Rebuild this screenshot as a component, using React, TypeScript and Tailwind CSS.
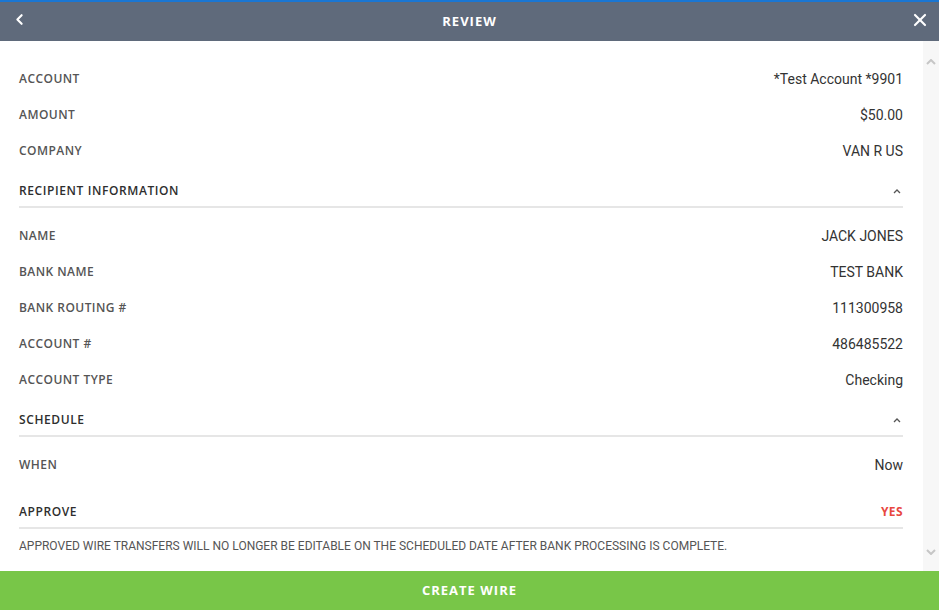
import { ChevronLeft, X } from 'lucide-react';

// Revisión de la transferencia antes de crearla.

const labelFont = { fontFamily: '"Open Sans", "DejaVu Sans", sans-serif' };

const LABEL = 'text-[12px] font-semibold tracking-[0.45px] text-[#555555]';
const VALUE = 'text-[14px] text-[#333333] font-["Roboto",sans-serif]';

type Row = { label: string; value: string };

const topRows: Row[] = [
  { label: 'ACCOUNT', value: '*Test Account *9901' },
  { label: 'AMOUNT', value: '$50.00' },
  { label: 'COMPANY', value: 'VAN R US' },
];

const recipientRows: Row[] = [
  { label: 'NAME', value: 'JACK JONES' },
  { label: 'BANK NAME', value: 'TEST BANK' },
  { label: 'BANK ROUTING #', value: '111300958' },
  { label: 'ACCOUNT #', value: '486485522' },
  { label: 'ACCOUNT TYPE', value: 'Checking' },
];

function DetailRow({ label, value }: Row) {
  return (
    <div className="flex h-[36px] items-center justify-between">
      <span className={LABEL}>{label}</span>
      <span className={VALUE}>{value}</span>
    </div>
  );
}

function Caret() {
  return (
    <svg width="8" height="5" viewBox="0 0 8 5" className="mr-[2px]">
      <path d="M1 4 L4 1 L7 4" fill="none" stroke="#555" strokeWidth="1.3" />
    </svg>
  );
}

function SectionHeader({ title, className = '' }: { title: string; className?: string }) {
  return (
    <div
      className={`flex items-center justify-between border-b-2 border-[#e6e6e6] pb-[7px] ${className}`}
    >
      <span className="text-[12px] leading-[16px] font-semibold tracking-[0.6px] text-[#2e2e2e]">
        {title}
      </span>
      <Caret />
    </div>
  );
}

export default function App() {
  return (
    <div className="flex h-[610px] w-[939px] flex-col bg-white" style={labelFont}>
      <header className="relative flex h-[41px] items-center justify-center border-t-2 border-[#1a76d2] bg-[#5f6a7b]">
        <ChevronLeft className="absolute left-[11px] top-[9px] text-white" size={17} strokeWidth={3} />
        <span className="text-[13px] font-bold tracking-[1px] text-white">REVIEW</span>
        <X className="absolute right-[9px] top-[8px] text-white" size={20} strokeWidth={2.6} />
      </header>

      <div className="flex min-h-0 flex-1">
        <main className="flex-1 pl-[19px] pr-[20px] pt-[20px]">
          {topRows.map((r) => (
            <DetailRow key={r.label} {...r} />
          ))}

          <SectionHeader title="RECIPIENT INFORMATION" className="pt-[14px]" />
          <div className="mt-[10px]">
            {recipientRows.map((r) => (
              <DetailRow key={r.label} {...r} />
            ))}
          </div>

          <SectionHeader title="SCHEDULE" className="pt-[14px]" />
          <div className="mt-[10px]">
            <DetailRow label="WHEN" value="Now" />
          </div>

          <div className="flex items-center justify-between border-b-2 border-[#e6e6e6] pb-[7px] pt-[21px]">
            <span className="text-[12px] leading-[16px] font-semibold tracking-[0.6px] text-[#2e2e2e]">
              APPROVE
            </span>
            <span className="text-[12px] leading-[16px] font-bold tracking-[0.4px] text-[#e8483f]">
              YES
            </span>
          </div>
          <p className="mt-[9px] text-[12px] leading-[16px] text-[#555555] font-['Roboto',sans-serif]">
            APPROVED WIRE TRANSFERS WILL NO LONGER BE EDITABLE ON THE SCHEDULED DATE AFTER BANK
            PROCESSING IS COMPLETE.
          </p>
        </main>

        <aside className="flex w-[16px] flex-col items-center justify-between bg-[#f7f7f7] pb-[16px] pt-[18px]">
          <svg width="10" height="6" viewBox="0 0 10 6">
            <path d="M1 5 L5 1 L9 5" fill="none" stroke="#c6c6c6" strokeWidth="2" />
          </svg>
          <svg width="10" height="6" viewBox="0 0 10 6">
            <path d="M1 1 L5 5 L9 1" fill="none" stroke="#c6c6c6" strokeWidth="2" />
          </svg>
        </aside>
      </div>

      <button className="flex h-[39px] items-center justify-center bg-[#78c648] text-[13px] font-bold tracking-[1px] text-white">
        CREATE WIRE
      </button>
    </div>
  );
}
